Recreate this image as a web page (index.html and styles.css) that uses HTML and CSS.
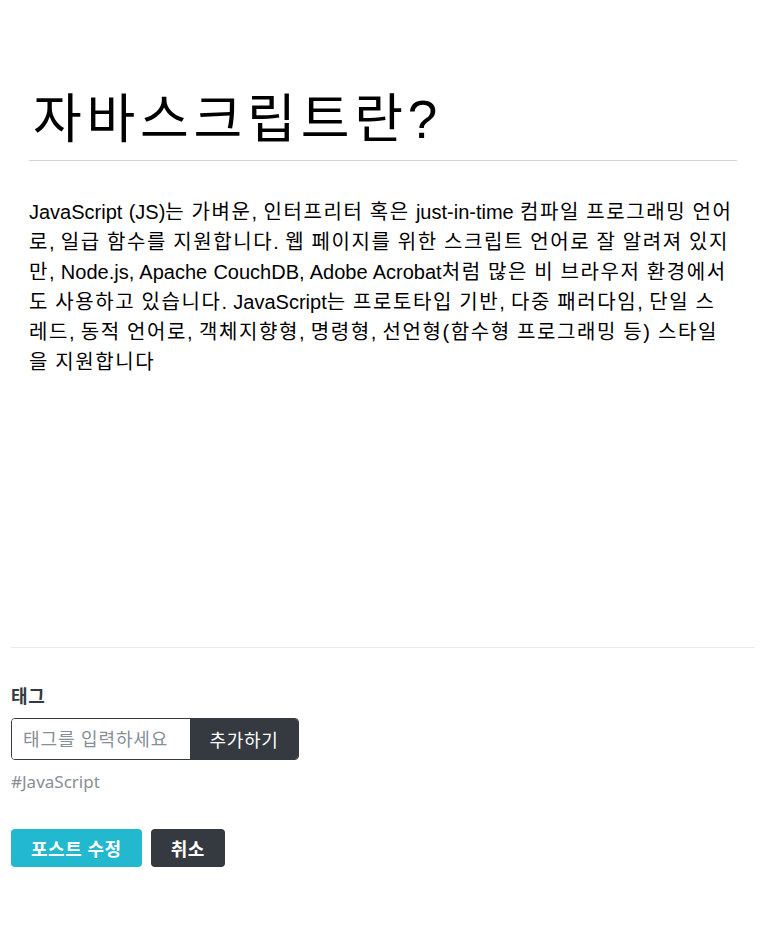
FILE: index.html
```html
<!DOCTYPE html>
<html lang="ko">
<head>
<meta charset="utf-8">
<title>포스트 수정</title>
<link rel="stylesheet" href="styles.css">
</head>
<body>
<div class="page">
  <div class="editor">
    <h1 class="title">자바스크립트란?</h1>
    <p class="content">JavaScript (JS)<span class="ko">는 가벼운</span>, <span class="ko">인터프리터 혹은</span> just-in-time <span class="ko">컴파일 프로그래밍 언어로</span>, <span class="ko">일급 함수를 지원합니다</span>. <span class="ko">웹 페이지를 위한 스크립트 언어로 잘 알려져 있지만</span>, Node.js, Apache CouchDB, Adobe Acrobat<span class="ko">처럼 많은 비 브라우저 환경에서도 사용하고 있습니다</span>. JavaScript<span class="ko">는 프로토타입 기반</span>, <span class="ko">다중 패러다임</span>, <span class="ko">단일 스레드</span>, <span class="ko">동적 언어로</span>, <span class="ko">객체지향형</span>, <span class="ko">명령형</span>, <span class="ko">선언형(함수형 프로그래밍 등)</span> <span class="ko">스타일을 지원합니다</span></p>
  </div>
  <div class="tag-box">
    <h4 class="tag-label">태그</h4>
    <form class="tag-form">
      <input class="tag-input" type="text" placeholder="태그를 입력하세요">
      <button class="tag-add" type="button">추가하기</button>
    </form>
    <div class="tag-list"><span class="tag">#JavaScript</span></div>
  </div>
  <div class="actions">
    <button class="btn btn-primary" type="button">포스트 수정</button>
    <button class="btn btn-dark" type="button">취소</button>
  </div>
</div>
</body>
</html>
```

FILE: styles.css
```css
html, body {
  margin: 0;
  padding: 0;
  background: #ffffff;
}

.page {
  padding: 0 13px 0 11px;
}

.editor {
  padding: 88px 18px 0 18px;
  height: 648px;
  border-bottom: 1px solid #e9ecef;
  box-sizing: border-box;
}

.title {
  margin: 0;
  padding: 0 0 8px 4px;
  font-family: "Liberation Sans", "Noto Sans CJK KR", sans-serif;
  font-weight: 400;
  font-size: 53px;
  line-height: 64px;
  letter-spacing: 0.09em;
  color: #000000;
  border-bottom: 1px solid #d3d3dd;
}

.content {
  margin: 36px 3px 0 0;
  font-family: "Liberation Sans", "Noto Sans CJK KR", sans-serif;
  font-size: 20px;
  line-height: 30px;
  word-spacing: 0.7px;
  color: #000000;
}

.ko {
  letter-spacing: 0.08em;
  word-spacing: -0.9px;
}

.tag-box {
  padding-top: 36px;
}

.tag-label {
  margin: 0 0 10px 0;
  font-family: "Noto Sans", "Noto Sans CJK KR", sans-serif;
  font-size: 18px;
  line-height: 24px;
  font-weight: 700;
  letter-spacing: 0.04em;
  color: #343a40;
}

.tag-form {
  display: flex;
  width: 288px;
  height: 42px;
  margin: 0;
  border: 1px solid #343a40;
  border-radius: 4px;
  overflow: hidden;
  box-sizing: border-box;
}

.tag-input {
  flex: 1;
  min-width: 0;
  border: none;
  outline: none;
  padding: 0 0 0 11px;
  font-family: "Noto Sans", "Noto Sans CJK KR", sans-serif;
  font-size: 18px;
  letter-spacing: 0.05em;
  color: #343a40;
}

.tag-input::placeholder {
  color: #868e96;
}

.tag-add {
  width: 108px;
  border: none;
  background: #343a40;
  color: #ffffff;
  font-family: "Noto Sans", "Noto Sans CJK KR", sans-serif;
  font-size: 18px;
  letter-spacing: 0.04em;
  padding: 0;
  cursor: pointer;
}

.tag-list {
  margin-top: 10px;
  font-family: "Noto Sans", "Noto Sans CJK KR", sans-serif;
  font-size: 17px;
  line-height: 24px;
  color: #868e96;
}

.actions {
  display: flex;
  gap: 9px;
  margin-top: 35px;
}

.btn {
  border: none;
  border-radius: 4px;
  height: 38px;
  padding: 0 20px;
  font-family: "Noto Sans", "Noto Sans CJK KR", sans-serif;
  font-size: 18px;
  font-weight: 700;
  letter-spacing: 0.03em;
  color: #ffffff;
  cursor: pointer;
}

.btn-primary {
  background: #22b8cf;
}

.btn-dark {
  background: #343a40;
}
```
